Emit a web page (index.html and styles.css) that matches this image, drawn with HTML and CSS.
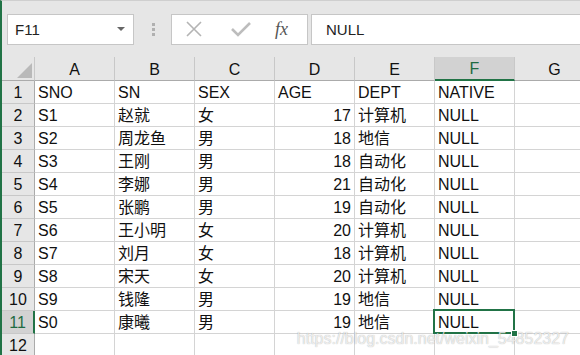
FILE: index.html
```html
<!DOCTYPE html>
<html lang="zh-CN">
<head>
    <meta charset="UTF-8">
    <meta name="viewport" content="width=device-width, initial-scale=1.0">
    <title>Sheet1</title>
    <link rel="stylesheet" href="styles.css">
</head>
<body>
    <!-- Строка формул -->
    <div class="formula-bar">
        <div class="name-box">
            <span>F11</span>
            <span class="name-arrow"></span>
        </div>
        <div class="grip"><i></i><i></i><i></i></div>
        <div class="fx-buttons">
            <svg class="fx-icon" width="20" height="20" viewBox="0 0 20 20">
                <path d="M3 3 L17 17 M17 3 L3 17" stroke="#b4b4b4" stroke-width="1.6" fill="none"/>
            </svg>
            <svg class="fx-icon" width="22" height="20" viewBox="0 0 22 20">
                <path d="M2 10 L8 16 L20 4" stroke="#bdbdbd" stroke-width="2.6" fill="none"/>
            </svg>
            <span class="fx-label">fx</span>
        </div>
        <div class="formula-input">NULL</div>
    </div>

    <!-- Лист -->
    <div class="sheet">
        <table class="grid">
            <colgroup>
                <col class="col-head">
                <col class="col-cell"><col class="col-cell"><col class="col-cell"><col class="col-cell">
                <col class="col-cell"><col class="col-cell"><col class="col-cell">
            </colgroup>
            <thead>
                <tr>
                    <th class="corner"><span class="corner-mark"></span></th>
                    <th>A</th><th>B</th><th>C</th><th>D</th><th>E</th>
                    <th class="selected-col">F</th><th>G</th>
                </tr>
            </thead>
            <tbody>
                <tr><th>1</th><td>SNO</td><td>SN</td><td>SEX</td><td>AGE</td><td>DEPT</td><td>NATIVE</td><td></td></tr>
                <tr><th>2</th><td>S1</td><td>赵就</td><td>女</td><td class="num">17</td><td>计算机</td><td>NULL</td><td></td></tr>
                <tr><th>3</th><td>S2</td><td>周龙鱼</td><td>男</td><td class="num">18</td><td>地信</td><td>NULL</td><td></td></tr>
                <tr><th>4</th><td>S3</td><td>王刚</td><td>男</td><td class="num">18</td><td>自动化</td><td>NULL</td><td></td></tr>
                <tr><th>5</th><td>S4</td><td>李娜</td><td>男</td><td class="num">21</td><td>自动化</td><td>NULL</td><td></td></tr>
                <tr><th>6</th><td>S5</td><td>张鹏</td><td>男</td><td class="num">19</td><td>自动化</td><td>NULL</td><td></td></tr>
                <tr><th>7</th><td>S6</td><td>王小明</td><td>女</td><td class="num">20</td><td>计算机</td><td>NULL</td><td></td></tr>
                <tr><th>8</th><td>S7</td><td>刘月</td><td>女</td><td class="num">18</td><td>计算机</td><td>NULL</td><td></td></tr>
                <tr><th>9</th><td>S8</td><td>宋天</td><td>女</td><td class="num">20</td><td>计算机</td><td>NULL</td><td></td></tr>
                <tr><th>10</th><td>S9</td><td>钱隆</td><td>男</td><td class="num">19</td><td>地信</td><td>NULL</td><td></td></tr>
                <tr><th class="selected-row">11</th><td>S0</td><td>康曦</td><td>男</td><td class="num">19</td><td>地信</td><td class="active">NULL</td><td></td></tr>
                <tr><th>12</th><td></td><td></td><td></td><td></td><td></td><td></td><td></td></tr>
            </tbody>
        </table>
    </div>

    <!-- Водяной знак -->
    <div class="watermark">https://blog.csdn.net/weixin_54852327</div>
</body>
</html>
```

FILE: styles.css
```css
/* Общие стили */
body {
    font-family: 'Liberation Sans', 'Noto Sans CJK SC', sans-serif;
    margin: 0;
    padding: 0;
    background-color: #e6e6e6;
    width: 580px;
    height: 355px;
    overflow: hidden;
    position: relative;
    box-sizing: border-box;
    border-left: 2px solid #217346;
    border-top: 1px solid #cfcfcf;
}

/* Строка формул */
.formula-bar {
    display: flex;
    align-items: center;
    height: 56px;
    padding: 0 0 0 5px;
}

.name-box {
    width: 127px;
    height: 31px;
    box-sizing: border-box;
    background-color: #fff;
    border: 1px solid #c6c6c6;
    display: flex;
    align-items: center;
    justify-content: space-between;
    padding: 0 8px 0 7px;
    font-size: 15px;
    color: #222;
}

.name-arrow {
    width: 0;
    height: 0;
    border-left: 4px solid transparent;
    border-right: 4px solid transparent;
    border-top: 4px solid #666;
}

.grip {
    display: flex;
    flex-direction: column;
    gap: 2px;
    margin: 0 16px 0 18px;
}

.grip i {
    width: 3px;
    height: 3px;
    background-color: #b0b0b0;
}

.fx-buttons {
    width: 137px;
    height: 31px;
    box-sizing: border-box;
    background-color: #fff;
    border: 1px solid #c6c6c6;
    display: flex;
    align-items: center;
    padding: 0 0 0 12px;
    gap: 26px;
}

.fx-label {
    font-family: 'Liberation Serif', serif;
    font-style: italic;
    font-size: 18px;
    color: #555;
    margin-left: -3px;
}

.formula-input {
    flex: 1;
    height: 31px;
    box-sizing: border-box;
    margin-left: 3px;
    background-color: #fff;
    border: 1px solid #c6c6c6;
    border-right: none;
    display: flex;
    align-items: center;
    padding-left: 14px;
    font-size: 15px;
    color: #222;
}

/* Таблица */
.grid {
    table-layout: fixed;
    border-collapse: separate;
    border-spacing: 0;
    width: 593px;
    font-size: 16px;
}

.col-head { width: 33px; }
.col-cell { width: 80px; }

.grid th,
.grid td {
    height: 22px;
    padding: 1px 3px 0;
    box-sizing: border-box;
    line-height: 21px;
    white-space: nowrap;
    overflow: hidden;
    color: #111;
}

.grid td {
    height: 23px;
    background-color: #fff;
    border-right: 1px solid #d4d4d4;
    border-bottom: 1px solid #d4d4d4;
    text-align: left;
}

.grid th {
    height: 23px;
    font-weight: 400;
    background-color: #e6e6e6;
    text-align: center;
    padding: 1px 0 0;
}

.grid thead th {
    border-right: 1px solid #c8c8c8;
    border-bottom: 1px solid #ababab;
}

.grid tbody th {
    border-right: 1px solid #ababab;
    border-bottom: 1px solid #c8c8c8;
}

.grid td.num {
    text-align: right;
}

.corner {
    position: relative;
}

.corner-mark {
    position: absolute;
    right: 2px;
    bottom: 2px;
    width: 0;
    height: 0;
    border-left: 15px solid transparent;
    border-bottom: 15px solid #b9b9b9;
}

/* Выделение */
.grid thead th.selected-col {
    background-color: #d2d2d2;
    color: #1f6b42;
    border-bottom: 2px solid #217346;
}

.grid tbody th.selected-row {
    background-color: #d2d2d2;
    color: #1f6b42;
    border-right: 2px solid #217346;
}

.grid td.active {
    position: relative;
    overflow: visible;
}

.grid td.active::after {
    content: "";
    position: absolute;
    top: -2px;
    left: -2px;
    right: -1px;
    bottom: -1px;
    border: 2px solid #217346;
}

.grid td.active::before {
    content: "";
    position: absolute;
    right: -4px;
    bottom: -4px;
    width: 5px;
    height: 5px;
    background-color: #217346;
    border: 1px solid #fff;
    z-index: 1;
}

/* Водяной знак */
.watermark {
    position: absolute;
    right: 11px;
    bottom: 7px;
    font-size: 16px;
    color: rgba(255, 255, 255, 0.75);
    text-shadow: 0 0 1px rgba(0, 0, 0, 0.35);
}
```
